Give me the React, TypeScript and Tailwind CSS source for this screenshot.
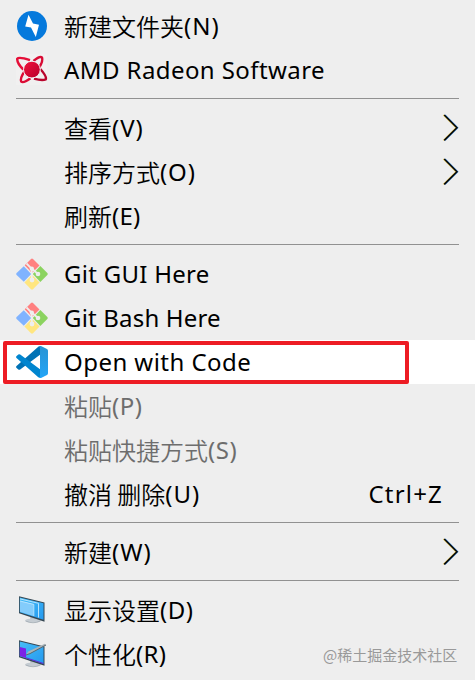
import type { ReactNode } from 'react';

function Svg({ children }: { children: ReactNode }) {
  return (
    <svg width="32" height="32" viewBox="0 0 32 32" className="block shrink-0">
      {children}
    </svg>
  );
}

function BoltIcon() {
  return (
    <Svg>
      <circle cx="16" cy="16" r="15" fill="#0579dc" />
      <path d="M12.5 4.8 L17 13.4 L23 14.7 L19.8 27 L15 17.6 L9.2 16.4 Z" fill="#fff" />
    </Svg>
  );
}

function RadeonIcon() {
  return (
    <Svg>
      <defs>
        <linearGradient id="radeon" x1="0" y1="0" x2="1" y2="1">
          <stop offset="0" stopColor="#f0143c" />
          <stop offset="1" stopColor="#b8002c" />
        </linearGradient>
      </defs>
      <rect width="31" height="31" fill="#f1f0f0" />
      <g fill="none" strokeWidth="2.4" strokeLinejoin="round">
        <path d="M14 6.2 Q3 2.6 1.2 4.8 Q1 9.5 7.4 15.5" stroke="#e50f38" />
        <path d="M17.5 7 Q23.5 1.8 26 3.4 Q27.3 7 23.2 13.5" stroke="#d80b34" />
        <path d="M24.3 15 Q31 22.5 29.8 25.4 Q26 27 18 24.6" stroke="#b9052d" />
        <path d="M14.5 24.2 Q7.5 29.4 5.2 27.6 Q4 24 8.3 17.8" stroke="#dc0c35" />
      </g>
      <circle cx="15.9" cy="15.6" r="8.4" fill="url(#radeon)" stroke="#f1f0f0" strokeWidth="1" />
    </Svg>
  );
}

function GitIcon() {
  return (
    <Svg>
      <path d="M7.8 8.2 L15.2 15.9 L7.8 23.8 L0.6 17 Q-.2 16 .6 15 Z" fill="#80b3ff" />
      <path d="M8.7 7.3 L15 1 Q16 .2 17 1 L23.5 7.5 L16 15 Z" fill="#ff8080" />
      <path d="M24.3 8.1 L31.3 15 Q32.2 16 31.3 17 L24.3 23.9 L16.8 16 Z" fill="#8bd35f" />
      <path d="M16 16.8 L23.6 24.6 L17 31.3 Q16 32.1 15 31.3 L8.4 24.6 Z" fill="#ffe680" />
      <path d="M10.5 5.5 L15.8 10.8 V22.5 M16 10.8 L22 16" fill="none" stroke="#eee" strokeWidth="1.8" />
      <circle cx="15.8" cy="10.8" r="2.2" fill="#eee" />
      <circle cx="22" cy="16" r="2.3" fill="#eee" />
      <circle cx="16" cy="22" r="2.4" fill="#eee" />
    </Svg>
  );
}

function CodeIcon() {
  return (
    <Svg>
      <defs>
        <linearGradient id="code-panel" x1="0" y1="0" x2="0" y2="1">
          <stop offset="0" stopColor="#2894d4" />
          <stop offset="1" stopColor="#23a5f7" />
        </linearGradient>
      </defs>
      <path d="M.5 20.1 Q-.4 21 .6 22 L2.3 23.5 Q3.2 24.2 4.2 23.5 L24 8.7 V.2 Q22.8 .2 22 1 Z" fill="#0072b5" />
      <path d="M.5 11.9 Q-.4 11 .6 10 L2.3 8.5 Q3.2 7.8 4.2 8.5 L24 23.3 V31.8 Q22.8 31.8 22 31 Z" fill="#0085cf" />
      <path d="M22 31 Q24 32.5 25.5 31.7 L31 29 Q32 28.4 32 27.2 V4.8 Q32 3.6 31 3 L25.5 .3 Q24 -.5 22 1 Q24 0 24 2.2 V29.8 Q24 32 22 31 Z" fill="url(#code-panel)" />
    </Svg>
  );
}

function Stand() {
  return (
    <>
      <path d="M14 22 L20 24 V27 H14.5 Z" fill="#b8c0c6" />
      <ellipse cx="17" cy="26.5" rx="7.8" ry="2" fill="#c5ccd2" />
      <path d="M9.5 27 Q17 30.5 24.5 27" fill="none" stroke="#8e9ba3" strokeWidth=".6" />
    </>
  );
}

function DisplayIcon() {
  return (
    <Svg>
      <defs>
        <linearGradient id="screen" x1="0" y1="0" x2="1" y2="1">
          <stop offset="0" stopColor="#47bdf7" />
          <stop offset="1" stopColor="#2499ef" />
        </linearGradient>
      </defs>
      <Stand />
      <path d="M3 2.3 L28.5 8.4 V27.8 L3 19.2 Z" fill="#354652" />
      <path d="M3.8 3.5 L27.5 9.2 V25.8 L3.8 18.3 Z" fill="url(#screen)" />
      <path d="M4 7 L17.5 10.2 V22 L4 17.8 Z" fill="#83ccfb" />
      <path d="M4 4.9 L22.5 9.3 V23.5 M4 7 L17.8 10.4 V22" fill="none" stroke="#c4eaff" strokeWidth=".9" />
    </Svg>
  );
}

function PersonalizeIcon() {
  return (
    <Svg>
      <Stand />
      <path d="M3 2.3 L28.5 8.4 V27.8 L3 19.2 Z" fill="#354652" />
      <path d="M3.8 3.5 L27.5 9.2 V25.8 L3.8 18.3 Z" fill="url(#screen)" />
      <path d="M3.8 9 L10 10.5 V20 L3.8 18 Z" fill="#7c22e6" />
      <path d="M10 19.8 L27.5 25.5" stroke="#6628d8" strokeWidth="1" />
      <path d="M10 17 L12.2 13.4 L28.8 5.8 L30 7 L14 15.6 Z" fill="#a9b3b8" />
      <path d="M10 17 L14 15.6 L30 7" fill="none" stroke="#596971" strokeWidth="1" />
    </Svg>
  );
}

function Chevron() {
  return (
    <svg width="18" height="28" viewBox="0 0 18 28" className="ml-auto block">
      <path d="M2.2 .9 L14.9 13.6 L2.2 26.3" transform="translate(-.8 .1)" fill="none" stroke="#f4d35c" strokeWidth="1.3" />
      <path d="M2.2 .9 L14.9 13.6 L2.2 26.3" transform="translate(.8 .1)" fill="none" stroke="#3285d6" strokeWidth="1.3" />
      <path d="M2.2 1 L14.9 13.7 L2.2 26.4" fill="none" stroke="#080808" strokeWidth="1.6" />
    </svg>
  );
}

type ItemProps = {
  cjk?: string;
  latin: string;
  tracking?: string;
  icon?: ReactNode;
  arrow?: boolean;
  disabled?: boolean;
  shortcut?: string;
  active?: boolean;
};

function Item({ cjk, latin, tracking = '', icon, arrow, disabled, shortcut, active }: ItemProps) {
  return (
    <div className={`relative flex h-11 items-center pl-4 pr-[15px] ${active ? 'bg-white' : ''} ${disabled ? 'text-[#6d6d6d]' : 'text-black'}`}>
      <div className="mr-4 h-8 w-8 shrink-0">{icon}</div>
      <div className="flex items-center whitespace-pre leading-8">
        {cjk && <span className="font-['Noto_Sans_CJK_SC',sans-serif] font-[350]">{cjk}</span>}
        <span className={tracking}>{latin}</span>
      </div>
      {shortcut && <span className="ml-auto mr-[17px] leading-8 tracking-[1.2px]">{shortcut}</span>}
      {arrow && <Chevron />}
      {active && <div className="absolute left-[3px] top-px h-[43px] w-[406px] rounded-[2px] border-4 border-[#ed1c24]" />}
    </div>
  );
}

function Separator() {
  return (
    <div className="h-3.5 px-4 pt-1.5">
      <div className="h-px bg-[#919191]" />
    </div>
  );
}

export default function App() {
  return (
    <div className="relative h-[680px] w-[475px] overflow-hidden bg-[#eeeeee] pt-1 font-['Noto_Sans','Noto_Sans_CJK_SC',sans-serif] text-2xl">
      <Item cjk="新建文件夹" latin="(N)" tracking="tracking-[1px]" icon={<BoltIcon />} />
      <Item latin="AMD Radeon Software" tracking="tracking-[.42px]" icon={<RadeonIcon />} />
      <Separator />
      <Item cjk="查看" latin="(V)" tracking="tracking-[1px]" arrow />
      <Item cjk="排序方式" latin="(O)" tracking="tracking-[.9px]" arrow />
      <Item cjk="刷新" latin="(E)" tracking="tracking-[.2px]" />
      <Separator />
      <Item latin="Git GUI Here" tracking="tracking-[.28px]" icon={<GitIcon />} />
      <Item latin="Git Bash Here" tracking="tracking-[.18px]" icon={<GitIcon />} />
      <Item latin="Open with Code" tracking="tracking-[.45px]" icon={<CodeIcon />} active />
      <Item cjk="粘贴" latin="(P)" tracking="tracking-[.5px]" disabled />
      <Item cjk="粘贴快捷方式" latin="(S)" tracking="tracking-[.5px]" disabled />
      <Item cjk="撤消 删除" latin="(U)" tracking="tracking-[1px]" shortcut="Ctrl+Z" />
      <Separator />
      <Item cjk="新建" latin="(W)" tracking="tracking-[1px]" arrow />
      <Separator />
      <Item cjk="显示设置" latin="(D)" tracking="tracking-[.5px]" icon={<DisplayIcon />} />
      <Item cjk="个性化" latin="(R)" tracking="tracking-[.3px]" icon={<PersonalizeIcon />} />
      <div className="absolute left-[323px] top-[645px] whitespace-nowrap font-['Noto_Sans_CJK_SC',sans-serif] text-[15px] leading-5 text-[#999]">@稀土掘金技术社区</div>
    </div>
  );
}
